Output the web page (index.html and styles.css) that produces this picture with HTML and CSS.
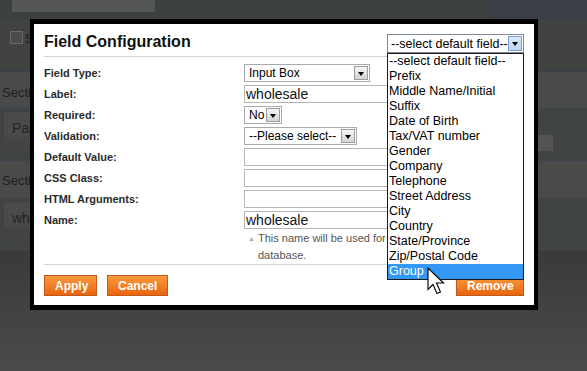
FILE: index.html
```html
<!DOCTYPE html>
<html lang="en">
<head>
  <meta charset="UTF-8" />
  <title>Field Configuration</title>
  <link rel="stylesheet" href="styles.css">
</head>
<body>
  <!-- dimmed page behind the dialog -->
  <div class="page">
    <div class="topbar">
      <div class="tab"></div>
      <div class="topbar-right"></div>
    </div>
    <div class="check-row"><span class="check"></span><span class="bg-text">Show</span></div>
    <div class="sect-title"><span class="bg-text">Section 1</span></div>
    <div class="sect-box"><div class="bg-field">Password</div><div class="bg-btn"></div></div>
    <div class="sect-title short"><span class="bg-text">Section 2</span></div>
    <div class="sect-box"><div class="bg-field">wholesale</div></div>
    <div class="page-foot"></div>
  </div>

  <div class="modal">
    <div class="modal-head">
      <h2>Field Configuration</h2>
      <div class="default-field">
        <div class="select select-open">
          <span class="select-text">--select default field--</span>
          <span class="select-arrow"></span>
        </div>
        <ul class="options">
          <li>--select default field--</li>
          <li>Prefix</li>
          <li>Middle Name/Initial</li>
          <li>Suffix</li>
          <li>Date of Birth</li>
          <li>Tax/VAT number</li>
          <li>Gender</li>
          <li>Company</li>
          <li>Telephone</li>
          <li>Street Address</li>
          <li>City</li>
          <li>Country</li>
          <li>State/Province</li>
          <li>Zip/Postal Code</li>
          <li class="active">Group</li>
        </ul>
      </div>
    </div>

    <div class="form">
      <label>Field Type:</label>
      <div class="select w-type"><span class="select-text">Input Box</span><span class="select-arrow"></span></div>

      <label>Label:</label>
      <input class="text" type="text" value="wholesale">

      <label>Required:</label>
      <div class="select w-req"><span class="select-text">No</span><span class="select-arrow"></span></div>

      <label>Validation:</label>
      <div class="select w-valid"><span class="select-text">--Please select--</span><span class="select-arrow"></span></div>

      <label>Default Value:</label>
      <input class="text" type="text" value="">

      <label>CSS Class:</label>
      <input class="text" type="text" value="">

      <label>HTML Arguments:</label>
      <input class="text" type="text" value="">

      <label>Name:</label>
      <input class="text" type="text" value="wholesale">
    </div>

    <div class="note">
      <span class="note-icon">&#9650;</span>
      <p>This name will be used for the column name in the<br>database.</p>
    </div>

    <div class="actions">
      <button class="btn">Apply</button>
      <button class="btn btn-cancel">Cancel</button>
      <button class="btn btn-remove">Remove</button>
    </div>
  </div>

  <svg class="cursor" width="18" height="28" viewBox="0 0 18 28">
    <path d="M1 1 L1 22.5 L6 17.5 L10 26.5 L13.5 25 L9.5 16 L16.5 16 Z" fill="#fff" stroke="#000" stroke-width="1.1" stroke-linejoin="miter"/>
  </svg>
</body>
</html>
```

FILE: styles.css
```css
body {
  margin: 0;
  width: 587px;
  height: 371px;
  overflow: hidden;
  font-family: 'Liberation Sans', Arial, sans-serif;
  position: relative;
}

/* background page */
.page {
  display: flex;
  flex-direction: column;
  height: 371px;
}

.topbar {
  height: 19px;
  display: flex;
  background: #3d413d;
}

.tab {
  width: 143px;
  height: 12px;
  margin-left: 12px;
  background: #545754;
}

.topbar-right {
  margin-left: auto;
  width: 97px;
  background: #3a3e46;
}

.check-row {
  height: 53px;
  box-sizing: border-box;
  display: flex;
  align-items: flex-start;
  gap: 2px;
  padding: 12px 0 0 10px;
  background: #404340;
  border-bottom: 2px solid #3a3f4a;
}

.check {
  width: 11px;
  height: 11px;
  border: 1px solid #6a6a6a;
  background: #4c4c4c;
}

.bg-text {
  font-size: 13px;
  color: #1f1f1f;
}

.sect-title {
  height: 36px;
  box-sizing: border-box;
  display: flex;
  align-items: center;
  padding: 4px 0 0 2px;
  background: #4a4a4a;
}

.sect-title.short {
  height: 37px;
  padding-top: 2px;
}

.sect-box {
  height: 51px;
  display: flex;
  gap: 8px;
  padding: 0 3px;
  background: #414541;
  border-top: 1px solid #3b4250;
  border-bottom: 1px solid #3b4250;
}

.bg-field {
  width: 120px;
  height: 44px;
  margin-top: 2px;
  box-sizing: border-box;
  padding: 8px 0 0 8px;
  border: 1px solid #3b4049;
  background: linear-gradient(#4a4a4a 60%, #444 60%);
  font-size: 14px;
  color: #242424;
}

.bg-btn {
  margin: 26px 31px 0 auto;
  width: 15px;
  height: 16px;
  background: #535353;
}

.page-foot {
  flex: 1;
  background: linear-gradient(#3a3a3a, #4b4b4b);
}

/* dialog */
.modal {
  position: absolute;
  left: 30px;
  top: 19px;
  width: 480px;
  padding: 8px 10px 9px;
  background: #fff;
  border-style: solid;
  border-color: #000;
  border-width: 5px 4px;
}

.modal-head {
  height: 24px;
  display: flex;
  justify-content: space-between;
  align-items: flex-start;
  border-bottom: 1px solid #d6d6d6;
}

.modal-head h2 {
  margin: 0;
  font-size: 16px;
  line-height: 20px;
  color: #111;
}

.default-field {
  position: relative;
  margin-top: 2px;
  z-index: 2;
}

.select {
  display: flex;
  align-items: center;
  height: 18px;
  box-sizing: border-box;
  border: 1px solid #a7abb0;
  background: #fff;
  font-size: 12px;
  color: #000;
}

.select-text {
  flex: 1;
  padding-left: 4px;
  white-space: nowrap;
}

.select-arrow {
  position: relative;
  width: 14px;
  height: 14px;
  margin-right: 1px;
  box-sizing: border-box;
  border: 1px solid #9d9d9d;
  background: linear-gradient(#f6f6f6, #d3d3d3);
}

.select-arrow::after {
  content: '';
  position: absolute;
  left: 2.5px;
  top: 5px;
  border-left: 3.5px solid transparent;
  border-right: 3.5px solid transparent;
  border-top: 4px solid #000;
}

.select-open {
  width: 137px;
  height: 19px;
  border-color: #7d8a99;
  font-size: 12.5px;
}

.select-open .select-text {
  padding-left: 3px;
}

.select-open .select-arrow {
  height: 15px;
  border-color: #7f9fcf;
  background: linear-gradient(#dceafa, #bdd6f3);
}

.options {
  position: absolute;
  top: 100%;
  left: 0;
  width: 137px;
  margin: 0;
  padding: 0;
  list-style: none;
  box-sizing: border-box;
  border: 1px solid #1a1a1a;
  background: #fff;
}

.options li {
  height: 15px;
  line-height: 15px;
  padding-left: 1px;
  font-size: 12.5px;
  color: #000;
  white-space: nowrap;
}

.options li.active {
  background: #3397f5;
  color: #fff;
}

.form {
  display: grid;
  grid-template-columns: 200px 1fr;
  grid-auto-rows: 21px;
  align-items: center;
  margin-top: 5px;
}

.form label {
  font-size: 11px;
  font-weight: bold;
  color: #2b2b2b;
}

.text {
  width: 280px;
  height: 18px;
  box-sizing: border-box;
  margin: 0;
  padding: 0 0 0 1px;
  border: 1px solid #b7b7b7;
  font-family: 'Liberation Sans', Arial, sans-serif;
  font-size: 14px;
  color: #111;
}

.w-type { width: 126px; }
.w-req { width: 38px; }
.w-valid { width: 113px; }

.w-req .select-text {
  padding-left: 4px;
}

.note {
  display: flex;
  height: 34px;
  padding-left: 204px;
  font-size: 11px;
  line-height: 17px;
  color: #555;
}

.note-icon {
  width: 10px;
  font-size: 7px;
  color: #9fb0b8;
}

.note p {
  margin: 0;
  white-space: nowrap;
}

.actions {
  display: flex;
  gap: 10px;
  padding-top: 10px;
  border-top: 1px solid #d6d6d6;
}

.btn {
  height: 21px;
  padding: 0 10px;
  border: 1px solid #c0591a;
  background: linear-gradient(#fb9a3e, #ea6510);
  color: #fff;
  font-family: 'Liberation Sans', Arial, sans-serif;
  font-size: 12px;
  font-weight: bold;
  cursor: pointer;
}

.btn { width: 53px; }
.btn-cancel { width: 61px; }
.btn-remove {
  width: 68px;
  margin-left: auto;
}

.cursor {
  position: absolute;
  left: 427px;
  top: 267px;
  z-index: 5;
}
```
